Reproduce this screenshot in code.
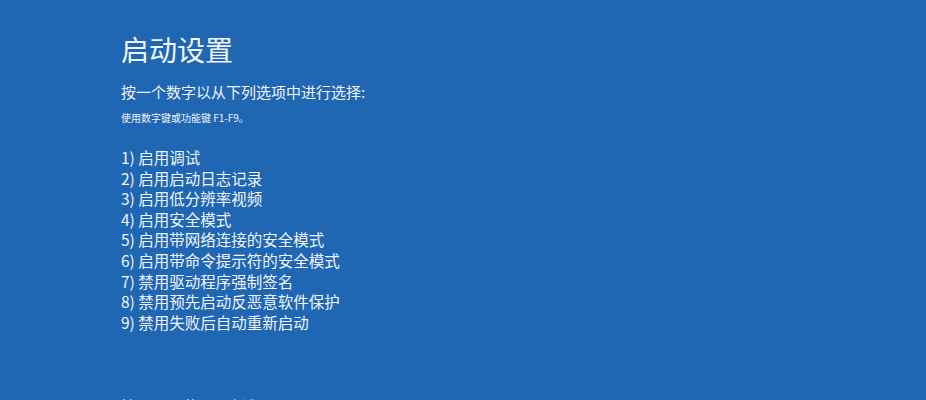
const OPTIONS = [
  '1) 启用调试',
  '2) 启用启动日志记录',
  '3) 启用低分辨率视频',
  '4) 启用安全模式',
  '5) 启用带网络连接的安全模式',
  '6) 启用带命令提示符的安全模式',
  '7) 禁用驱动程序强制签名',
  '8) 禁用预先启动反恶意软件保护',
  '9) 禁用失败后自动重新启动',
];

export default function App() {
  return (
    <div
      className="h-[400px] w-full overflow-hidden bg-[#1f66b3] pl-[121px] pt-[35px] text-[#f2f5fa]"
      style={{ fontFamily: '"Noto Sans CJK SC", "Noto Sans", sans-serif' }}
    >
      <h1 className="text-[28px] leading-[28px] font-normal">启动设置</h1>
      <p className="mt-[21px] text-[15px] leading-[15px]">按一个数字以从下列选项中进行选择:</p>
      <p className="mt-[14px] text-[10px] leading-[10px]">使用数字键或功能键 F1-F9。</p>

      {/* options */}
      <ul className="mt-[24px]">
        {OPTIONS.map((o) => (
          <li key={o} className="text-[15.5px] leading-[20.6px]">{o}</li>
        ))}
      </ul>

      <p className="mt-[66px] text-[15px] leading-[15px] text-[#d6e2f2]">按 F10 以获取更多选项</p>
    </div>
  );
}
